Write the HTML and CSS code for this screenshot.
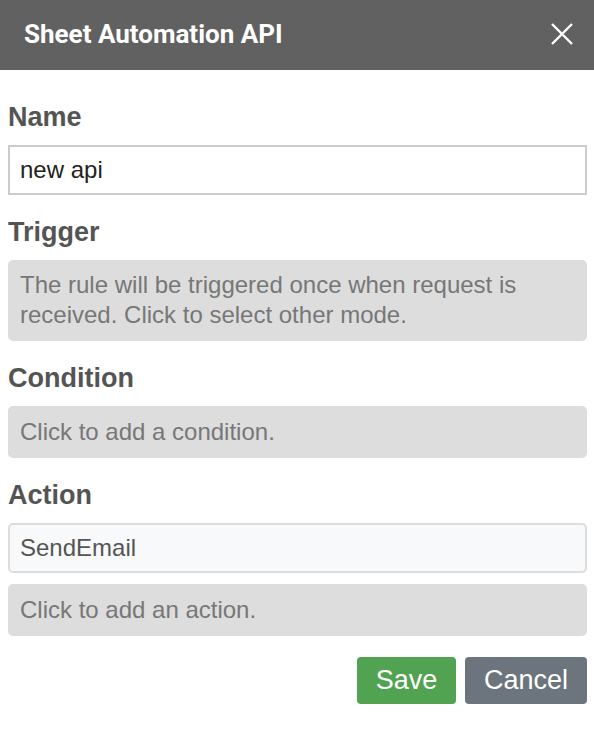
FILE: index.html
```html
<!DOCTYPE html>
<html>
<head>
<meta charset="utf-8">
<link rel="stylesheet" href="styles.css">
</head>
<body>
<div class="dialog">
  <div class="header">
    <span class="title">Sheet Automation API</span>
    <svg class="close" width="22" height="22" viewBox="0 0 22 22"><path d="M1 1 L21 21 M21 1 L1 21" stroke="#fff" stroke-width="2.4" fill="none"/></svg>
  </div>
  <div class="content">
    <div class="section">
      <div class="label">Name</div>
      <div class="input">new api</div>
    </div>
    <div class="section">
      <div class="label">Trigger</div>
      <div class="box box-tall">The rule will be triggered once when request is received. Click to select other mode.</div>
    </div>
    <div class="section">
      <div class="label">Condition</div>
      <div class="box">Click to add a condition.</div>
    </div>
    <div class="section">
      <div class="label">Action</div>
      <div class="action-item">SendEmail</div>
      <div class="box">Click to add an action.</div>
    </div>
    <div class="buttons">
      <button class="btn save">Save</button>
      <button class="btn cancel">Cancel</button>
    </div>
  </div>
</div>
</body>
</html>
```
FILE: styles.css
```css
body {
  margin: 0;
  font-family: "Liberation Sans", Arial, sans-serif;
  background: #fff;
}
.header {
  height: 70px;
  background: #616161;
  display: flex;
  align-items: center;
  justify-content: space-between;
  padding: 0 21px 2px 24px;
  box-sizing: border-box;
}
.title {
  font-family: Roboto, sans-serif;
  font-weight: 700;
  font-size: 26px;
  color: #fff;
}
.close {
  display: block;
}
.content {
  padding: 31px 7px 0 8px;
  display: flex;
  flex-direction: column;
  gap: 21px;
}
.section {
  display: flex;
  flex-direction: column;
  gap: 11px;
}
.label {
  font-size: 27px;
  font-weight: 700;
  line-height: 32px;
  color: #545454;
  margin-bottom: 1px;
}
.input {
  height: 50px;
  box-sizing: border-box;
  border: 2px solid #cccccc;
  padding: 0 10px;
  font-size: 24px;
  line-height: 46px;
  color: #222;
}
.box {
  background: #dddddd;
  border-radius: 5px;
  padding: 11px 12px 12px;
  font-size: 24px;
  line-height: 29px;
  color: #777;
}
.box-tall {
  padding: 10px 12px 11px;
  line-height: 30px;
}
.action-item {
  height: 50px;
  box-sizing: border-box;
  border: 2px solid #dddddd;
  border-radius: 5px;
  background: #f8f9fa;
  padding: 0 10px;
  font-size: 24px;
  line-height: 46px;
  color: #555;
}
.buttons {
  display: flex;
  justify-content: flex-end;
  gap: 9px;
}
.btn {
  height: 47px;
  border: none;
  border-radius: 4px;
  font-family: "Liberation Sans", Arial, sans-serif;
  font-size: 27px;
  color: #fff;
  padding: 0 18px;
}
.save {
  background: #51a351;
  width: 99px;
}
.cancel {
  background: #6c757d;
  width: 122px;
}
```
